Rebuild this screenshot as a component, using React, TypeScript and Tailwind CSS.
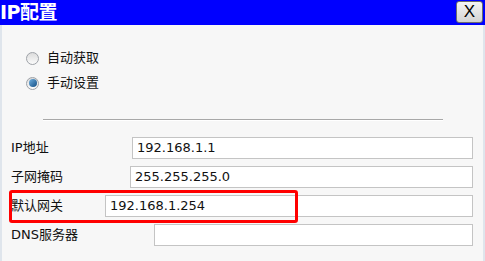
import React from "react";

const fields = [
  { label: "IP地址", value: "192.168.1.1", labelW: "w-[121px]" },
  { label: "子网掩码", value: "255.255.255.0", labelW: "w-[119px]" },
  { label: "默认网关", value: "192.168.1.254", labelW: "w-[94px]" },
  { label: "DNS服务器", value: "", labelW: "w-[143px]" },
];

function Radio({ checked, label }: { checked?: boolean; label: string }) {
  return (
    <div className="flex items-center h-[20px]">
      <span className="ml-[24px] w-[13px] h-[13px] rounded-full border border-[#9ea2a8] bg-gradient-to-b from-[#dcdcdc] to-[#fbfbfb] flex items-center justify-center">
        {checked && (
          <span className="w-[8px] h-[8px] rounded-full bg-gradient-to-br from-[#6fb0e0] to-[#0f4e84]" />
        )}
      </span>
      <span className="ml-[8px] text-[13px] text-[#111]">{label}</span>
    </div>
  );
}

export default function App() {
  return (
    <div
      className="w-[485px] h-[261px] bg-[#f7f7f7] relative overflow-hidden"
      style={{ fontFamily: '"DejaVu Sans", "Noto Sans CJK SC", sans-serif' }}
    >
      {/* title bar */}
      <div className="h-[25px] bg-[#0000ff] flex items-center justify-between">
        <span className="text-white text-[19px] font-bold leading-none tracking-[-0.5px]">IP配置</span>
        <button className="mr-[2px] mt-[-2px] w-[27px] h-[22px] rounded-[3px] border border-[#6d6d6d] bg-gradient-to-b from-[#f4f4f4] to-[#d4d4d4] text-[17px] leading-none text-black flex items-center justify-center"
          style={{ fontFamily: '"Liberation Sans", sans-serif' }}>
          X
        </button>
      </div>

      <div className="h-[236px] border-l-2 border-r-2 border-[#dfe5ec] pt-[23px]">
        <div className="flex flex-col gap-[5px]">
          <Radio label="自动获取" />
          <Radio checked label="手动设置" />
        </div>

        <div className="ml-[41px] mt-[26px] w-[400px] h-[2px] bg-[#a8a8a8] border-b border-white" />

        <div className="mt-[16px] flex flex-col gap-[7px]">
          {fields.map((f) => (
            <div key={f.label} className="flex items-center pl-[9px]">
              <span className={`${f.labelW} text-[13px] text-[#111] shrink-0`}>{f.label}</span>
              <div className="w-[341px] flex-1 mr-[10px] h-[22px] bg-white border border-[#c4c4c4] flex items-center pl-[4px] text-[13px] text-[#111]">
                {f.value}
              </div>
            </div>
          ))}
        </div>
      </div>

      {/* red highlight annotation */}
      <div className="absolute left-[9px] top-[190px] w-[289px] h-[33px] border-[3px] border-[#ff0000] rounded-[3px]" />
    </div>
  );
}
